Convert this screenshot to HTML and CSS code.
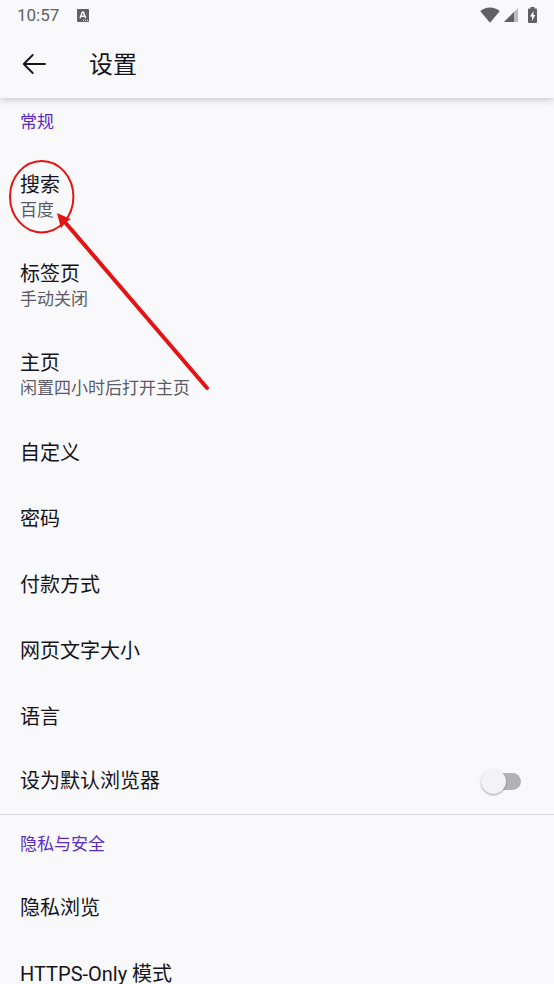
FILE: index.html
```html
<!DOCTYPE html>
<html lang="zh-CN">
<head>
<meta charset="utf-8">
<meta name="viewport" content="width=device-width, initial-scale=1">
<title>设置</title>
<link rel="stylesheet" href="styles.css">
</head>
<body>
<div class="app">
  <div class="status">
    <span class="time">10:57</span>
    <svg class="status-app" width="12" height="13" viewBox="0 0 12 13" aria-hidden="true">
      <rect width="12" height="13" rx="1" fill="#616163"/>
      <path d="M3 9.200 5.300 3.300h1.200L8.800 9.200M4 7.300h3.800" fill="none" stroke="#fff" stroke-width="1.400"/>
      <path d="M6 11.300h5" stroke="#fff" stroke-width="1" stroke-dasharray="1 1"/>
    </svg>
    <div class="status-icons">
      <svg width="20" height="16" viewBox="0 0 20 16" aria-hidden="true">
        <path d="M.3 4.200C5.500-.7 14.500-.7 19.700 4.200L10 15.700z" fill="#616163"/>
      </svg>
      <svg width="14" height="14" viewBox="0 0 14 14" aria-hidden="true">
        <path d="M14 0v14H0z" fill="#bcbcbe"/>
        <path d="M10 4v10H0z" fill="#616163"/>
      </svg>
      <svg width="9" height="16" viewBox="0 0 9 16" aria-hidden="true">
        <path d="M2.500 0h4v1.600H8q1 0 1 1V15q0 1-1 1H1q-1 0-1-1V2.600q0-1 1-1h1.500z" fill="#616163"/>
        <path d="M5.500 4 2 9.500h2V14l3.300-6H5.400z" fill="#fff"/>
      </svg>
    </div>
  </div>
  <header class="bar">
    <button class="back" type="button" aria-label="返回">
      <svg width="24" height="22" viewBox="0 0 24 22" fill="none" stroke="#15141a" stroke-width="1.800" stroke-linecap="round" stroke-linejoin="round" aria-hidden="true">
        <path d="M23 11H1.700M10.700 2 1.700 11l9 9"/>
      </svg>
    </button>
    <h1>设置</h1>
  </header>
  <main class="list">
    <section class="group">
      <h2>常规</h2>
      <a class="row" href="#search"><span class="name">搜索</span><span class="note">百度</span></a>
      <a class="row" href="#tabs"><span class="name">标签页</span><span class="note">手动关闭</span></a>
      <a class="row" href="#home"><span class="name">主页</span><span class="note">闲置四小时后打开主页</span></a>
      <a class="row" href="#customize"><span class="name">自定义</span></a>
      <a class="row" href="#passwords"><span class="name">密码</span></a>
      <a class="row" href="#payment"><span class="name">付款方式</span></a>
      <a class="row" href="#text-size"><span class="name">网页文字大小</span></a>
      <a class="row" href="#language"><span class="name">语言</span></a>
      <div class="row toggle">
        <label class="name" for="default-browser">设为默认浏览器</label>
        <input class="switch" id="default-browser" type="checkbox" role="switch">
      </div>
    </section>
    <section class="group">
      <h2>隐私与安全</h2>
      <a class="row" href="#private"><span class="name">隐私浏览</span></a>
      <a class="row" href="#https-only"><span class="name">HTTPS-Only 模式</span></a>
    </section>
  </main>
  <svg class="mark" width="220" height="400" viewBox="0 0 220 400" aria-hidden="true">
    <ellipse cx="41.700" cy="196.700" rx="31.700" ry="35.700" fill="none" stroke="#e51414" stroke-width="2"/>
    <path d="M64 221 207 388" stroke="#e51414" stroke-width="4" stroke-linecap="round"/>
    <path d="M57 213 71 219.300 65.500 222 61 228.500z" fill="#e51414"/>
  </svg>
</div>
</body>
</html>
```
FILE: styles.css
```css
* {
  box-sizing: border-box;
}

body {
  margin: 0;
  background: #f9f9fb;
  color: #15141a;
  font-family: Roboto, "Noto Sans CJK SC", sans-serif;
}

.app {
  position: relative;
  display: flex;
  flex-direction: column;
  height: 100vh;
  overflow: hidden;
}

.status {
  z-index: 1;
  display: flex;
  flex: none;
  align-items: center;
  height: 30px;
  padding: 0 17px;
  background: #f9f9fb;
  color: #616163;
}

.time {
  font-size: 17px;
  line-height: 30px;
}

.status-app {
  margin-left: 18px;
}

.status-icons {
  display: flex;
  align-items: center;
  gap: 4px;
  margin-left: auto;
}

.status-icons svg:last-child {
  margin-left: 6px;
}

.bar {
  display: flex;
  flex: none;
  align-items: center;
  gap: 43px;
  height: 68px;
  padding-left: 22px;
  box-shadow: 0 1px 8px rgba(0, 0, 0, 0.24);
}

.back {
  display: flex;
  padding: 0;
  border: 0;
  background: none;
}

h1 {
  margin: 0;
  padding-top: 2px;
  font-size: 24px;
  font-weight: 400;
  line-height: 36px;
}

.list {
  flex: 1;
  min-height: 0;
  overflow-y: auto;
  scrollbar-width: none;
}

.group + .group {
  border-top: 1px solid #dcdcdf;
}

h2 {
  margin: 0;
  padding: 17px 20px;
  color: #592acb;
  font-size: 17px;
  font-weight: 400;
  line-height: 24px;
}

.group:first-child h2 {
  padding-top: 12px;
}

.row {
  display: flex;
  flex-direction: column;
  justify-content: center;
  min-height: 66px;
  padding: 22px 20px 18px;
  color: inherit;
  text-decoration: none;
}

.name {
  font-size: 20px;
  line-height: 25px;
}

.note {
  color: #5b5b66;
  font-size: 17px;
  line-height: 24px;
}

.toggle {
  flex-direction: row;
  align-items: center;
  justify-content: space-between;
  padding: 20px 33px 20px 20px;
}

.switch {
  position: relative;
  width: 36px;
  height: 17px;
  margin: 0;
  appearance: none;
  border-radius: 9px;
  background: #b2b2b4;
}

.switch::before {
  content: "";
  position: absolute;
  top: -4px;
  left: -4px;
  width: 25px;
  height: 25px;
  border-radius: 50%;
  background: #f3f3f3;
  box-shadow: 0 1px 2px rgba(0, 0, 0, 0.35);
}

.switch:checked::before {
  left: 15px;
}

.mark {
  position: absolute;
  top: 0;
  left: 0;
  pointer-events: none;
}
```
